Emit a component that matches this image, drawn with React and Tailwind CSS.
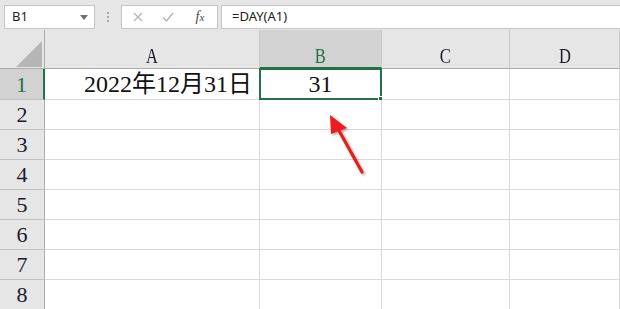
import React from 'react';

const serif = { fontFamily: '"Liberation Serif", "Noto Sans CJK SC", serif' };
const sans = { fontFamily: '"Noto Sans", "Liberation Sans", sans-serif' };

const cols = ['A', 'B', 'C', 'D'];
const rows = [1, 2, 3, 4, 5, 6, 7, 8];

const Toolbar = () => (
  <div className="h-[30px] bg-[#e6e6e6] flex items-start pt-[5px] pl-[4px]" style={sans}>
    {/* Name box */}
    <div className="w-[91px] h-[24px] bg-white border border-[#c6c6c6] flex items-center justify-between pl-[7px] pr-[6px]">
      <span className="text-[13px] text-[#222]">B1</span>
      <svg width="8" height="5" viewBox="0 0 8 5">
        <path d="M0 0h8L4 5z" fill="#6f6f6f" />
      </svg>
    </div>
    {/* Separator dots */}
    <div className="w-[26px] h-[24px] flex flex-col items-center justify-center gap-[2px]">
      <span className="w-[2px] h-[2px] bg-[#a8a8a8]" />
      <span className="w-[2px] h-[2px] bg-[#a8a8a8]" />
      <span className="w-[2px] h-[2px] bg-[#a8a8a8]" />
    </div>
    {/* Cancel / enter / fx */}
    <div className="w-[97px] h-[24px] bg-white border border-[#c6c6c6] flex items-center pl-[1px]">
      <span className="w-[30px] flex justify-center">
        <svg width="10" height="10" viewBox="0 0 10 10">
          <path d="M1 1l8 8M9 1l-8 8" stroke="#b4b4b4" strokeWidth="1.2" />
        </svg>
      </span>
      <span className="w-[30px] flex justify-center">
        <svg width="12" height="10" viewBox="0 0 12 10">
          <path d="M1 5.5l3.5 3.5L11 1" stroke="#b4b4b4" strokeWidth="1.4" fill="none" />
        </svg>
      </span>
      <span className="w-[34px] flex justify-center">
        <span className="text-[14px] italic text-[#444] leading-none" style={serif}>
          f<span className="text-[11px]">x</span>
        </span>
      </span>
    </div>
    {/* Formula input */}
    <div className="flex-1 ml-[3px] h-[24px] bg-white border border-[#c6c6c6] border-r-0 flex items-center pl-[10px]">
      <span className="text-[13px] text-[#222]">=DAY(A1)</span>
    </div>
  </div>
);

const ColHeader = ({ label }) => {
  const sel = label === 'B';
  return (
    <div
      className={`h-[39px] flex items-center justify-center pt-[13px] text-[22px] border-r border-[#c8c8c8] ${
        sel ? 'bg-[#d2d2d2] text-[#217346] border-b-2 border-b-[#217346]' : 'bg-[#e6e6e6] text-[#1a1a2a] border-b border-b-[#ababab]'
      }`}
      style={serif}
    >
      <span className="inline-block scale-x-[0.75]">{label}</span>
    </div>
  );
};

const RowHeader = ({ n }) => {
  const sel = n === 1;
  return (
    <div
      className={`flex items-center justify-center text-[22px] border-b border-[#c0c0c0] ${
        n === 1 ? 'h-[31px]' : 'h-[30px]'
      } ${sel ? 'bg-[#d2d2d2] text-[#217346] border-r-2 border-r-[#217346]' : 'bg-[#e6e6e6] text-[#1a1a2a] border-r border-r-[#ababab]'}`}
      style={serif}
    >
      {n}
    </div>
  );
};

const Cell = ({ r, c }) => {
  const h = r === 1 ? 'h-[31px]' : 'h-[30px]';
  let content = null;
  if (r === 1 && c === 'A') {
    content = <span className="ml-auto pr-[7px] text-[24px] text-[#111]">2022年12月31日</span>;
  }
  if (r === 1 && c === 'B') {
    content = <span className="mx-auto text-[24px] text-[#111]">31</span>;
  }
  return (
    <div className={`relative ${h} flex items-center bg-white border-r border-b border-[#d9d9d9]`} style={serif}>
      {content}
      {r === 1 && c === 'B' && (
        <>
          <div className="absolute left-[-1px] top-[-1px] right-[-1px] bottom-[-1px] border-2 border-[#217346] pointer-events-none" />
          <div className="absolute right-[-4px] bottom-[-4px] w-[7px] h-[7px] bg-[#217346] border border-white" />
        </>
      )}
    </div>
  );
};

const App = () => (
  <div className="relative w-[620px] h-[309px] overflow-hidden bg-white">
    <Toolbar />
    <div className="grid grid-cols-[45px_215px_122px_128px_1fr]">
      {/* Corner */}
      <div className="h-[39px] bg-[#e6e6e6] border-r border-b border-[#ababab] flex items-end justify-end pr-[2px] pb-[1px]">
        <svg width="26" height="26" viewBox="0 0 26 26">
          <path d="M26 0V26H0z" fill="#b5b5b5" />
        </svg>
      </div>
      {cols.map(c => (
        <ColHeader key={c} label={c} />
      ))}
      {rows.map(r => (
        <React.Fragment key={r}>
          <RowHeader n={r} />
          {cols.map(c => (
            <Cell key={c} r={r} c={c} />
          ))}
        </React.Fragment>
      ))}
    </div>
    {/* Red arrow annotation */}
    <svg className="absolute left-0 top-0 pointer-events-none" width="620" height="309">
      <defs>
        <filter id="sh" x="-50%" y="-50%" width="200%" height="200%">
          <feDropShadow dx="1.5" dy="1.5" stdDeviation="1.2" floodColor="#000" floodOpacity="0.35" />
        </filter>
      </defs>
      <g filter="url(#sh)">
        <path d="M362 172L337 127" stroke="#ea1c1c" strokeWidth="3.2" strokeLinecap="round" />
        <path d="M330 115L347 128L331 134z" fill="#ea1c1c" />
      </g>
    </svg>
  </div>
);

export default App;
